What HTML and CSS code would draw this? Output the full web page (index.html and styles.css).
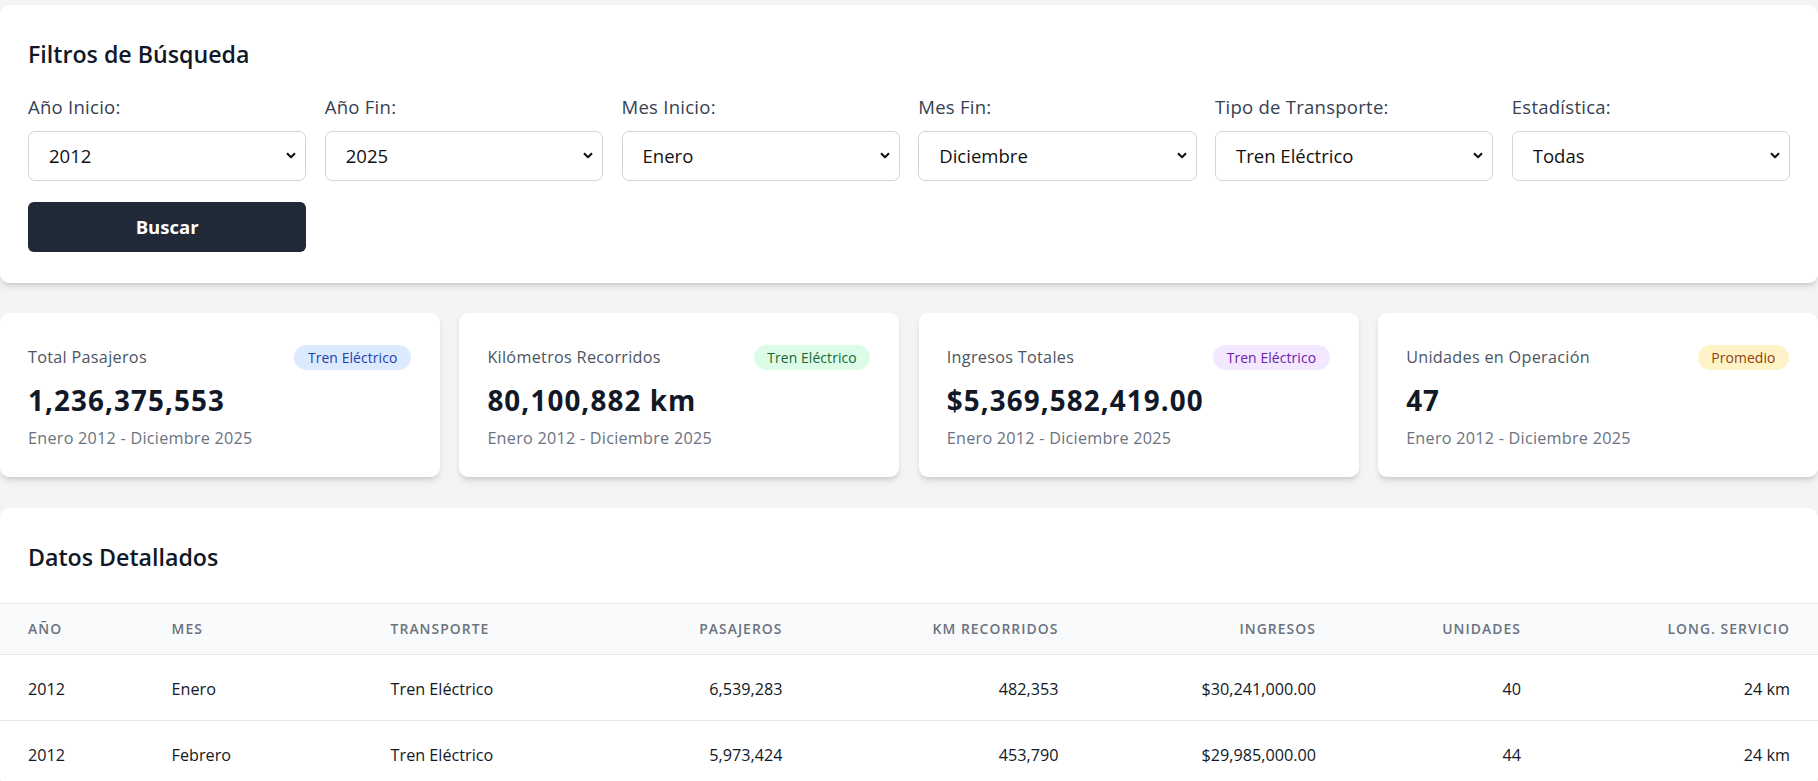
FILE: index.html
```html
<!DOCTYPE html>
<html lang="es">
<head>
<meta charset="utf-8">
<title>Estadísticas de Transporte</title>
<link rel="stylesheet" href="styles.css">
</head>
<body>
<div class="page">
  <section class="card filters">
    <h2 class="card-title">Filtros de Búsqueda</h2>
    <div class="filter-grid">
      <div class="field">
        <label class="field-label">Año Inicio:</label>
        <div class="select-wrap">
          <select class="select"><option>2012</option></select>
          <svg class="chev" viewBox="0 0 10 7"><path d="M1 1.2 L5 5.2 L9 1.2"/></svg>
        </div>
      </div>
      <div class="field">
        <label class="field-label">Año Fin:</label>
        <div class="select-wrap">
          <select class="select"><option>2025</option></select>
          <svg class="chev" viewBox="0 0 10 7"><path d="M1 1.2 L5 5.2 L9 1.2"/></svg>
        </div>
      </div>
      <div class="field">
        <label class="field-label">Mes Inicio:</label>
        <div class="select-wrap">
          <select class="select"><option>Enero</option></select>
          <svg class="chev" viewBox="0 0 10 7"><path d="M1 1.2 L5 5.2 L9 1.2"/></svg>
        </div>
      </div>
      <div class="field">
        <label class="field-label">Mes Fin:</label>
        <div class="select-wrap">
          <select class="select"><option>Diciembre</option></select>
          <svg class="chev" viewBox="0 0 10 7"><path d="M1 1.2 L5 5.2 L9 1.2"/></svg>
        </div>
      </div>
      <div class="field">
        <label class="field-label">Tipo de Transporte:</label>
        <div class="select-wrap">
          <select class="select"><option>Tren Eléctrico</option></select>
          <svg class="chev" viewBox="0 0 10 7"><path d="M1 1.2 L5 5.2 L9 1.2"/></svg>
        </div>
      </div>
      <div class="field">
        <label class="field-label">Estadística:</label>
        <div class="select-wrap">
          <select class="select"><option>Todas</option></select>
          <svg class="chev" viewBox="0 0 10 7"><path d="M1 1.2 L5 5.2 L9 1.2"/></svg>
        </div>
      </div>
      <button class="btn" type="button">Buscar</button>
    </div>
  </section>

  <section class="stats">
    <div class="stat">
      <div class="stat-head">
        <span class="stat-label">Total Pasajeros</span>
        <span class="badge badge-blue">Tren Eléctrico</span>
      </div>
      <div class="stat-value">1,236,375,553</div>
      <div class="stat-sub">Enero 2012 - Diciembre 2025</div>
    </div>
    <div class="stat">
      <div class="stat-head">
        <span class="stat-label">Kilómetros Recorridos</span>
        <span class="badge badge-green">Tren Eléctrico</span>
      </div>
      <div class="stat-value">80,100,882 km</div>
      <div class="stat-sub">Enero 2012 - Diciembre 2025</div>
    </div>
    <div class="stat">
      <div class="stat-head">
        <span class="stat-label">Ingresos Totales</span>
        <span class="badge badge-purple">Tren Eléctrico</span>
      </div>
      <div class="stat-value">$5,369,582,419.00</div>
      <div class="stat-sub">Enero 2012 - Diciembre 2025</div>
    </div>
    <div class="stat">
      <div class="stat-head">
        <span class="stat-label">Unidades en Operación</span>
        <span class="badge badge-yellow">Promedio</span>
      </div>
      <div class="stat-value">47</div>
      <div class="stat-sub">Enero 2012 - Diciembre 2025</div>
    </div>
  </section>

  <section class="card table-card">
    <h2 class="card-title">Datos Detallados</h2>
    <table class="data">
      <colgroup>
        <col class="c1"><col class="c2"><col class="c3"><col class="c4">
        <col class="c5"><col class="c6"><col class="c7"><col class="c8">
      </colgroup>
      <thead>
        <tr>
          <th>Año</th>
          <th>Mes</th>
          <th>Transporte</th>
          <th class="num">Pasajeros</th>
          <th class="num">Km Recorridos</th>
          <th class="num">Ingresos</th>
          <th class="num">Unidades</th>
          <th class="num">Long. Servicio</th>
        </tr>
      </thead>
      <tbody>
        <tr>
          <td>2012</td>
          <td>Enero</td>
          <td>Tren Eléctrico</td>
          <td class="num">6,539,283</td>
          <td class="num">482,353</td>
          <td class="num">$30,241,000.00</td>
          <td class="num">40</td>
          <td class="num">24 km</td>
        </tr>
        <tr>
          <td>2012</td>
          <td>Febrero</td>
          <td>Tren Eléctrico</td>
          <td class="num">5,973,424</td>
          <td class="num">453,790</td>
          <td class="num">$29,985,000.00</td>
          <td class="num">44</td>
          <td class="num">24 km</td>
        </tr>
      </tbody>
    </table>
  </section>
</div>
</body>
</html>
```

FILE: styles.css
```css
* {
  box-sizing: border-box;
}

html, body {
  margin: 0;
  padding: 0;
}

body {
  background: #f3f4f6;
  font-family: "Open Sans", "Noto Sans", "Liberation Sans", sans-serif;
  color: #111827;
}

.page {
  padding-top: 5px;
}

.card {
  background: #ffffff;
  border-radius: 9px;
  box-shadow: 0 4.6px 7px -1px rgba(0, 0, 0, 0.10), 0 2.3px 4.6px -2px rgba(0, 0, 0, 0.10);
}

.card-title {
  margin: 0;
  font-size: 23.2px;
  line-height: 32.5px;
  font-weight: 600;
  color: #111827;
}

/* Filters */
.filters {
  padding: 32.7px 28px 31px;
}

.filter-grid {
  margin-top: 22.7px;
  display: grid;
  grid-template-columns: repeat(6, 1fr);
  column-gap: 18.5px;
  row-gap: 21px;
}

.field-label {
  display: block;
  font-size: 18.55px;
  line-height: 27.8px;
  letter-spacing: 0.25px;
  color: #374151;
  margin-bottom: 10.3px;
}

.select-wrap {
  position: relative;
}

.select {
  display: block;
  width: 100%;
  height: 50px;
  -webkit-appearance: none;
  appearance: none;
  background: #ffffff;
  border: 1px solid #d1d5db;
  border-radius: 7px;
  padding: 0 40px 0 20px;
  font-family: inherit;
  font-size: 18.55px;
  color: #111111;
}

.chev {
  position: absolute;
  right: 10px;
  top: 50%;
  width: 10px;
  height: 7px;
  margin-top: -4px;
  pointer-events: none;
}

.chev path {
  fill: none;
  stroke: #111111;
  stroke-width: 2.1;
  stroke-linejoin: round;
}

.btn {
  height: 50px;
  width: 100%;
  background: #1f2937;
  color: #ffffff;
  border: 0;
  border-radius: 5.8px;
  font-family: inherit;
  font-size: 18.55px;
  font-weight: 700;
  cursor: pointer;
}

/* Stats */
.stats {
  margin-top: 30px;
  display: grid;
  grid-template-columns: repeat(4, 1fr);
  gap: 19.5px;
}

.stat {
  background: #ffffff;
  border-radius: 9px;
  padding: 30.3px 29px 27.1px 28px;
  box-shadow: 0 4.6px 7px -1px rgba(0, 0, 0, 0.10), 0 2.3px 4.6px -2px rgba(0, 0, 0, 0.10);
}

.stat-head {
  height: 28.6px;
  display: flex;
  align-items: center;
  justify-content: space-between;
}

.stat-label {
  font-size: 16.2px;
  line-height: 23.2px;
  font-weight: 500;
  letter-spacing: 0.3px;
  color: #4b5563;
}

.badge {
  height: 25px;
  padding: 0 13.5px;
  border-radius: 999px;
  font-size: 13.9px;
  line-height: 25px;
  font-weight: 500;
  letter-spacing: 0.1px;
}

.badge-blue { background: #dbeafe; color: #1e40af; }
.badge-green { background: #dcfce7; color: #166534; }
.badge-purple { background: #f3e8ff; color: #6b21a8; }
.badge-yellow { background: #fef3c7; color: #92400e; }

.stat-value {
  margin-top: 10.4px;
  font-size: 27.8px;
  line-height: 37px;
  font-weight: 700;
  letter-spacing: 1.1px;
  color: #111827;
}

.stat-sub {
  margin-top: 7.4px;
  font-size: 16.2px;
  line-height: 23.2px;
  letter-spacing: 0.25px;
  color: #6b7280;
}

/* Table */
.table-card {
  margin-top: 31px;
  padding-top: 32.7px;
  overflow: hidden;
}

.table-card .card-title {
  padding: 0 28px;
}

.data {
  margin-top: 30px;
  width: 100%;
  table-layout: fixed;
  border-collapse: collapse;
}

.c1 { width: 143.6px; }
.c2 { width: 219px; }
.c3 { width: 197.3px; }
.c4 { width: 250.6px; }
.c5 { width: 275.9px; }
.c6 { width: 257.5px; }
.c7 { width: 205px; }
.c8 { width: 269px; }

.data th {
  height: 50.7px;
  padding: 0 28px;
  background: #f9fafb;
  border-top: 1px solid #e5e7eb;
  border-bottom: 1px solid #e5e7eb;
  text-align: left;
  font-size: 13.9px;
  font-weight: 600;
  letter-spacing: 0.075em;
  text-transform: uppercase;
  color: #6b7280;
  white-space: nowrap;
}

.data td {
  height: 66px;
  padding: 3px 28px 0;
  border-bottom: 1px solid #e5e7eb;
  font-size: 16.2px;
  color: #111827;
  white-space: nowrap;
}

.data .num {
  text-align: right;
}
```
